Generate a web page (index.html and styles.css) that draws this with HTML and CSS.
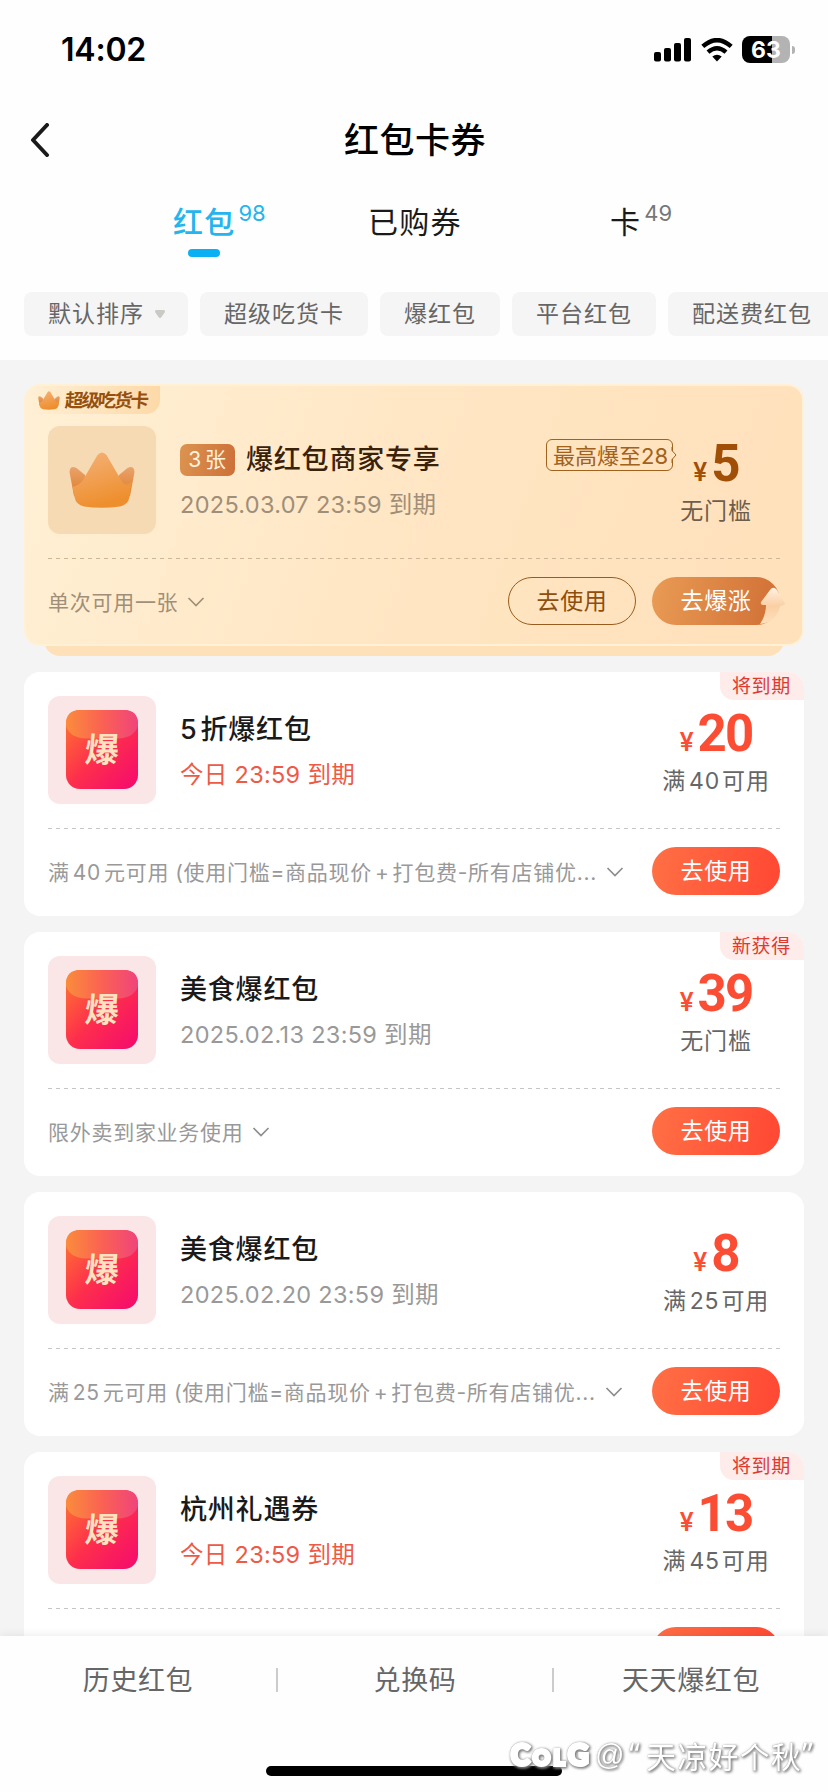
FILE: index.html
```html
<!DOCTYPE html>
<html lang="zh-CN">
<head>
<meta charset="utf-8">
<title>红包卡券</title>
<link rel="stylesheet" href="styles.css">
</head>
<body>
<svg class="defs" width="0" height="0">
  <defs>
    <linearGradient id="gRed" x1="0" y1="0" x2="1" y2="1"><stop offset="0" stop-color="#ff7a30"/><stop offset=".5" stop-color="#fd2f4c"/><stop offset="1" stop-color="#f5096f"/></linearGradient>
    <linearGradient id="gGloss" x1="0" y1="0" x2="1" y2="0"><stop offset="0" stop-color="#fb8c3c"/><stop offset=".5" stop-color="#fa6252"/><stop offset="1" stop-color="#f0437c"/></linearGradient>
    <linearGradient id="gCrown" x1="0" y1="0" x2=".3" y2="1"><stop offset="0" stop-color="#f4b27a"/><stop offset="1" stop-color="#ee8f2e"/></linearGradient>
    <linearGradient id="gLeaf" x1="0" y1="0" x2="0" y2="1"><stop offset="0" stop-color="#e9a36c"/><stop offset="1" stop-color="#de7c28"/></linearGradient>
    <linearGradient id="gArrow" x1="0" y1="0" x2="0" y2="1"><stop offset="0" stop-color="#fff1e0"/><stop offset=".5" stop-color="#fbcfa4"/><stop offset="1" stop-color="#fde0bd"/></linearGradient>
  </defs>
  <symbol id="crown" viewBox="0 0 66 56">
    <path d="M.5 20Q1 13 7.500 16L16 23L18 40L5 44Z" fill="url(#gLeaf)"/>
    <path d="M65.500 20Q65 13 58.500 16L50 23L48 40L61 44Z" fill="url(#gLeaf)"/>
    <path d="M28.500 3Q33 -2 37.500 3L52 28Q56 36 62.500 30L60.500 45Q59 53 51 54.500Q33 57 15 54.500Q7 53 5.500 45L3.500 35Q11 33 14 28Z" fill="url(#gCrown)"/>
  </symbol>
  <symbol id="packet" viewBox="0 0 72 80">
    <rect x="0" y="0" width="72" height="79" rx="14" fill="url(#gRed)"/>
    <path d="M0 14Q0 0 14 0H58Q72 0 72 14V16Q68 28 52 28.500H20Q4 28 0 16Z" fill="url(#gGloss)"/>
  </symbol>
  <symbol id="chev" viewBox="0 0 18 12"><path d="M1.500 2L9 9.500L16.500 2" fill="none" stroke="currentColor" stroke-width="1.700"/></symbol>
</svg>

<header class="top">
  <div class="status">
    <span class="clock">14:02</span>
    <svg class="signal" viewBox="0 0 37 24"><rect x="0" y="14" width="7" height="9.500" rx="2"/><rect x="10" y="10" width="7" height="13.500" rx="2"/><rect x="20" y="5" width="7" height="18.500" rx="2"/><rect x="30" y="0" width="7" height="23.500" rx="2"/></svg>
    <svg class="wifi" viewBox="0 0 32 24"><g fill="none" stroke="#000" stroke-width="4.400"><path d="M1.800 8.400Q16-4.200 30.200 8.400"/><path d="M7 14.200Q16 6.400 25 14.200"/></g><path d="M16 23.500L11.300 18.600Q16 15 20.700 18.600Z"/></svg>
    <div class="battery"><span>63</span></div><i class="nub"></i>
  </div>
  <div class="nav">
    <svg class="back" viewBox="0 0 20 34"><path d="M17 2L3 17L17 32" fill="none" stroke="#1a1a1a" stroke-width="4" stroke-linecap="round" stroke-linejoin="round"/></svg>
    <h1>红包卡券</h1>
  </div>
  <nav class="tabs">
    <a class="tab on">红包<sup>98</sup></a>
    <a class="tab">已购券</a>
    <a class="tab">卡<sup>49</sup></a>
  </nav>
  <div class="chips">
    <span class="chip">默认排序<svg class="tri" viewBox="0 0 12 10"><path d="M1.500 0H10.500Q12.500 1 11 3L7 8.500Q6 9.500 5 8.500L1 3Q-.5 1 1.500 0Z"/></svg></span>
    <span class="chip">超级吃货卡</span><span class="chip">爆红包</span><span class="chip">平台红包</span><span class="chip">配送费红包</span>
  </div>
</header>

<main class="list">
  <div class="stack">
    <section class="card vip">
      <div class="viptag"><svg class="mini"><use href="#crown"/></svg><b>超级吃货卡</b></div>
      <div class="row">
        <div class="thumb"><svg class="crown"><use href="#crown"/></svg></div>
        <div class="info"><h2><em>3<i>张</i></em>爆红包商家专享</h2><p class="date">2025.03.07 23:59 到期</p></div>
        <div class="bubble">最高爆至28<svg class="tip" viewBox="0 0 6 16"><path d="M1 0V3.500L5 8L1 12.500V16" fill="#ffe6c3" stroke="#a0621c"/></svg></div>
        <div class="price"><div class="amt"><small>¥</small>5</div><p>无门槛</p></div>
      </div>
      <div class="dash"></div>
      <div class="foot"><span>单次可用一张</span><svg class="chev"><use href="#chev"/></svg><a class="btn line">去使用</a><a class="btn gold">去爆涨<svg class="up" viewBox="0 0 26 38"><path d="M14.500 1Q12 0 10 3L1 15Q0 18 3 18H6Q6 28 0 37Q16 36 20 19L24 18Q26 17 24 14.500L17 3Q16 1.500 14.500 1Z" fill="url(#gArrow)"/></svg></a></div>
    </section>
  </div>

  <section class="card">
    <span class="flag">将到期</span>
    <div class="row">
      <div class="thumb"><svg class="packet"><use href="#packet"/></svg><b>爆</b></div>
      <div class="info"><h2>5<i>折爆红包</i></h2><p class="date hot">今日 23:59 到期</p></div>
      <div class="price"><div class="amt"><small>¥</small>20</div><p>满<u>40</u>可用</p></div>
    </div>
    <div class="dash"></div>
    <div class="foot"><span>满<u>40</u>元可用<u class="par">(</u>使用门槛=商品现价<u class="plus">+</u>打包费-所有店铺优...</span><svg class="chev"><use href="#chev"/></svg><a class="btn">去使用</a></div>
  </section>

  <section class="card">
    <span class="flag">新获得</span>
    <div class="row">
      <div class="thumb"><svg class="packet"><use href="#packet"/></svg><b>爆</b></div>
      <div class="info"><h2>美食爆红包</h2><p class="date">2025.02.13 23:59 到期</p></div>
      <div class="price"><div class="amt"><small>¥</small>39</div><p>无门槛</p></div>
    </div>
    <div class="dash"></div>
    <div class="foot"><span>限外卖到家业务使用</span><svg class="chev"><use href="#chev"/></svg><a class="btn">去使用</a></div>
  </section>

  <section class="card">
    <div class="row">
      <div class="thumb"><svg class="packet"><use href="#packet"/></svg><b>爆</b></div>
      <div class="info"><h2>美食爆红包</h2><p class="date">2025.02.20 23:59 到期</p></div>
      <div class="price"><div class="amt"><small>¥</small>8</div><p>满<u>25</u>可用</p></div>
    </div>
    <div class="dash"></div>
    <div class="foot"><span>满<u>25</u>元可用<u class="par">(</u>使用门槛=商品现价<u class="plus">+</u>打包费-所有店铺优...</span><svg class="chev"><use href="#chev"/></svg><a class="btn">去使用</a></div>
  </section>

  <section class="card">
    <span class="flag">将到期</span>
    <div class="row">
      <div class="thumb"><svg class="packet"><use href="#packet"/></svg><b>爆</b></div>
      <div class="info"><h2>杭州礼遇券</h2><p class="date hot">今日 23:59 到期</p></div>
      <div class="price"><div class="amt"><small>¥</small>13</div><p>满<u>45</u>可用</p></div>
    </div>
    <div class="dash"></div>
    <div class="foot"><span></span><a class="btn"></a></div>
  </section>
</main>

<footer class="bottom">
  <div class="links"><a>历史红包</a><a>兑换码</a><a>天天爆红包</a></div>
  <div class="home"></div>
  <div class="mark"><b>C<i>O</i><i>L</i>G</b><span class="at">@</span><span class="name"><q>“</q>天凉好个秋<q>”</q></span></div>
</footer>
</body>
</html>
```
FILE: styles.css
```css
* { box-sizing: border-box; margin: 0; padding: 0; }
body {
  width: 828px; height: 1792px; overflow: hidden;
  display: flex; flex-direction: column;
  background: #f4f4f4; color: #1a1a1a;
  font-family: Inter, "Noto Sans CJK SC", sans-serif;
}
svg { display: block; flex: none; }
i, em { font-style: normal; }
u { text-decoration: none; }
.defs { position: absolute; }

.top { height: 360px; background: #fefefe; flex: none; }
.status { height: 99px; padding: 0 34px 0 61px; display: flex; align-items: center; }
.clock { font-size: 32px; font-weight: 600; color: #000; margin-right: auto; letter-spacing: -.2px; }
.signal { width: 37px; height: 24px; margin-right: 10px; }
.wifi { width: 32px; height: 24px; margin-right: 9px; }
.battery {
  width: 48px; height: 27px; border-radius: 8px;
  background: linear-gradient(90deg, #000 30px, #b3b3b3 30px);
  color: #fff; font-size: 23px; font-weight: 700; line-height: 28px; text-align: center;
}
.nub { width: 3px; height: 8px; margin-left: 2px; margin-right: -1px; background: #b3b3b3; border-radius: 0 4px 4px 0; }

.nav { height: 82px; display: flex; align-items: center; padding-left: 30px; }
.back { width: 20px; height: 34px; }
h1 { flex: 1; text-align: center; margin-right: 48px; font-size: 35px; font-weight: 500; color: #000; letter-spacing: .5px; line-height: 50px; }

.tabs { height: 111px; padding: 16px 0 0 173px; display: grid; grid-template-columns: 195px 242px 1fr; align-items: start; }
.tab { font-size: 30px; line-height: 50px; letter-spacing: 1.200px; position: relative; white-space: nowrap; }
.tab sup { font-size: 22px; line-height: 20px; letter-spacing: 0; color: #777; vertical-align: 12px; margin-left: 3px; }
.tab.on { color: #25b4ee; font-weight: 500; }
.tab.on sup { color: #25b4ee; font-weight: 400; }
.tab.on::after { content: ""; position: absolute; left: 15px; top: 52px; width: 32px; height: 8px; border-radius: 4px; background: #0ab0f4; }

.chips { display: flex; gap: 12px; padding-left: 24px; overflow: hidden; }
.chip { flex: none; display: flex; align-items: center; height: 44px; padding: 0 24px; border-radius: 8px; background: #f5f5f5; color: #666; font-size: 23px; letter-spacing: 1px; line-height: 44px; }
.tri { width: 12px; height: 9px; margin-left: 10px; margin-right: -2px; fill: #c9c9c5; }

.list { flex: 1; min-height: 0; overflow: hidden; padding: 24px 24px 0; display: flex; flex-direction: column; gap: 16px; }
.card { flex: none; position: relative; height: 244px; padding: 24px 24px 0; background: #fff; border-radius: 16px; }
.row { display: flex; height: 108px; }
.thumb { flex: none; position: relative; width: 108px; height: 108px; border-radius: 12px; background: #fbe6e7; padding: 14px 18px; }
.packet { width: 72px; height: 80px; }
.thumb b { position: absolute; left: 37px; top: 34px; font-size: 34px; line-height: 40px; color: #ffe3c0; font-weight: 700; transform: skewX(-4deg); }
.info { margin-left: 24px; flex: 1; white-space: nowrap; }
h2 { font-size: 27px; font-weight: 500; line-height: 40px; letter-spacing: .8px; margin-top: 14px; display: flex; align-items: center; }
h2 > i { margin-left: 3px; }
.date { font-size: 23.500px; line-height: 36px; color: #999; letter-spacing: .3px; margin-top: 7px; }
.date.hot { color: #ee5a46; }
.price { width: 128px; flex: none; text-align: center; white-space: nowrap; }
.amt { font-family: Roboto, sans-serif; font-weight: 700; font-size: 51px; line-height: 60px; letter-spacing: -1.800px; color: #fb4d34; margin-top: 8px; }
.amt small { font-size: 26px; letter-spacing: 0; margin-right: 4px; font-weight: 500; }
.price p { font-size: 23px; line-height: 34px; letter-spacing: .8px; color: #666; margin-top: -8px; }
.price u { margin: 0 2px 0 3px; }
.dash { height: 1px; margin-top: 24px; background: repeating-linear-gradient(90deg, #c6c6c6 0 4px, transparent 4px 8px); }
.foot { display: flex; align-items: center; height: 48px; margin-top: 18px; color: #999; font-size: 21px; letter-spacing: .72px; white-space: nowrap; }
.foot u { margin: 0 3px; }
.foot .par { margin: 0 0 0 6px; }
.chev { width: 18px; height: 12px; margin-left: 9px; margin-top: 2px; color: #8d8d8d; }
.btn { margin-left: auto; width: 128px; height: 48px; border-radius: 24px; line-height: 49px; text-align: center; font-size: 23px; letter-spacing: .6px; color: #fff; background: linear-gradient(100deg, #ff7045, #ff4733); position: relative; }
.flag { position: absolute; right: 0; top: 0; width: 84px; height: 28px; line-height: 29px; padding-left: 12px; border-radius: 0 16px 0 14px; background: #feeceb; color: #e0392f; font-size: 19px; letter-spacing: .6px; }

.stack { position: relative; z-index: 0; padding-bottom: 10px; flex: none; }
.stack::after { content: ""; position: absolute; z-index: -1; left: 20px; right: 20px; bottom: 0; height: 40px; border-radius: 16px; background: #fee1b8; }
.vip { height: 262px; padding: 40px 22px 0; border: 2px solid #fff0d6; background: linear-gradient(110deg, #fff0d5, #ffe5c2 55%, #ffe1bb); }
.viptag { position: absolute; left: 0; top: 0; width: 134px; height: 28px; border-radius: 14px 0 14px 0; background: linear-gradient(90deg, #fff0d5, #fdd9a8); display: flex; align-items: center; padding-left: 12px; white-space: nowrap; }
.mini { width: 22px; height: 19px; }
.viptag b { font-size: 18.500px; line-height: 28px; font-weight: 700; letter-spacing: -2.100px; color: #95500f; margin-left: 5px; transform: skewX(-4deg); }
.vip .thumb { background: #f6dab3; padding: 26px 21px; }
.crown { width: 66px; height: 56px; }
.vip h2 { color: #3a210a; }
.vip em { display: flex; justify-content: center; gap: 3px; width: 55px; height: 32px; margin-right: 11px; border-radius: 7px; background: linear-gradient(100deg, #dc9450, #cd6f38); color: #fff3df; font-size: 21px; line-height: 32px; font-weight: 400; }
.vip .date, .vip .foot, .vip .chev { color: #a08f78; }
.bubble { position: relative; margin: 13px -21px 0 0; width: 127px; height: 32px; border: 1px solid #a0621c; border-radius: 6px; color: #a0621c; font-size: 22px; line-height: 32px; padding-left: 6px; white-space: nowrap; }
.tip { position: absolute; right: -5px; top: 7px; width: 6px; height: 16px; }
.vip .amt { color: #a14e06; }
.vip .price p { color: #6d5e4c; }
.vip .dash { background: repeating-linear-gradient(90deg, #cdb695 0 4px, transparent 4px 8px); }
.line { background: none; border: 1px solid #9a5c1c; color: #8d4e0e; line-height: 47px; }
.gold { margin-left: 16px; background: linear-gradient(100deg, #e99b54, #d06f35); }
.up { position: absolute; right: -6px; top: 10px; width: 26px; height: 38px; }

.bottom { flex: none; height: 156px; background: #fefefe; box-shadow: 0 0 10px rgba(0,0,0,.09); position: relative; }
.links { display: grid; grid-template-columns: repeat(3, 276px); height: 88px; align-items: center; text-align: center; font-size: 27px; color: #666; letter-spacing: .6px; }
.links a { line-height: 26px; height: 24px; }
.links a + a { border-left: 2px solid #ccc; }
.home { width: 296px; height: 10px; margin: 42px auto 0; border-radius: 5px; background: #000; }
.mark { position: absolute; left: 508px; top: 97px; display: flex; align-items: center; height: 44px; color: #fff; font-family: "Liberation Sans", "Noto Sans CJK SC", sans-serif; font-size: 30px; letter-spacing: 1.200px; filter: drop-shadow(1px 1px 1.500px #777) drop-shadow(0 0 .5px #999); white-space: nowrap; }
.mark b { font-family: Lato, sans-serif; font-size: 28px; line-height: 40px; font-weight: 700; -webkit-text-stroke: 4px #fff; width: 87px; padding-left: 3px; letter-spacing: 3.500px; }
.mark b i { font-size: 21px; }
.at { width: 34px; font-size: 29px; }
.name { display: flex; }
q { quotes: none; width: 16px; font-family: "Noto Sans", sans-serif; }
q:first-child { margin-right: 1px; }
```
